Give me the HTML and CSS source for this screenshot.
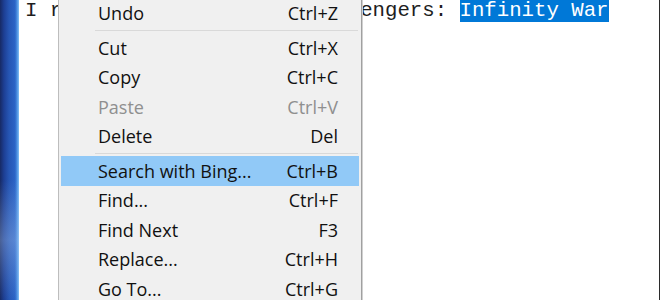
FILE: index.html
```html
<!DOCTYPE html>
<html>
<head>
    <title>Notepad - Context Menu</title>
    <link rel="stylesheet" href="styles.css">
</head>
<body>
    <div class="screen">
        <div class="desktop"></div>
        <div class="notepad">
            <div class="doc">I really liked the movie Avengers: <span class="sel">Infinity War</span></div>
        </div>

        <div class="context-menu">
            <div class="item"><span>Undo</span><span>Ctrl+Z</span></div>
            <div class="sep"></div>
            <div class="item"><span>Cut</span><span>Ctrl+X</span></div>
            <div class="item"><span>Copy</span><span>Ctrl+C</span></div>
            <div class="item disabled"><span>Paste</span><span>Ctrl+V</span></div>
            <div class="item"><span>Delete</span><span>Del</span></div>
            <div class="sep"></div>
            <div class="item active"><span>Search with Bing...</span><span>Ctrl+B</span></div>
            <div class="item"><span>Find...</span><span>Ctrl+F</span></div>
            <div class="item"><span>Find Next</span><span>F3</span></div>
            <div class="item"><span>Replace...</span><span>Ctrl+H</span></div>
            <div class="item"><span>Go To...</span><span>Ctrl+G</span></div>
        </div>
    </div>
</body>
</html>
```

FILE: styles.css
```css
* { margin: 0; padding: 0; box-sizing: border-box; }
body { width: 660px; height: 300px; overflow: hidden; background: #fff; }
.screen { position: relative; display: flex; height: 300px; overflow: hidden; }

/* desktop wallpaper peeking out on the left */
.desktop {
    width: 19px; flex-shrink: 0;
    background:
        linear-gradient(to bottom, rgba(255,255,255,0) 0, rgba(255,255,255,0) 60%, rgba(170,200,240,0.35) 80%, rgba(255,255,255,0) 100%),
        linear-gradient(to right, #172a64 0, #1d3f94 4px, #2656b4 9px, #2c64c6 15px, #4a8ee0 17px, #86c0f4 19px);
}

.notepad { flex: 1; background: #fff; border-right: 1px solid #2b2b2b; padding-left: 6px; }
.doc {
    margin-top: -1.5px;
    font-family: "Liberation Mono", monospace; font-size: 20.7px;
    color: #1e1e1e; white-space: pre;
}
.sel { background: #0078d7; color: #fff; }

/* context menu */
.context-menu {
    position: absolute; left: 58px; top: -5px; width: 304px;
    padding: 2.5px 2px 12px;
    background: #f0f0f0;
    border: 1px solid #bdbdbd; border-right-color: #a0a0a0;
    box-shadow: 1px 0 0 #d0d0d0;
    font-family: "Open Sans", sans-serif; font-size: 18px; color: #111;
}
.item {
    display: flex; justify-content: space-between; align-items: center;
    height: 29.5px; padding: 0 21px 0 37px; line-height: 1;
}
.item.disabled { color: #8f8f8f; }
.item.active { background: #91c9f7; }
.sep { height: 1px; margin: 2px 1px 2px 34px; background: #d9d9d9; }
```
